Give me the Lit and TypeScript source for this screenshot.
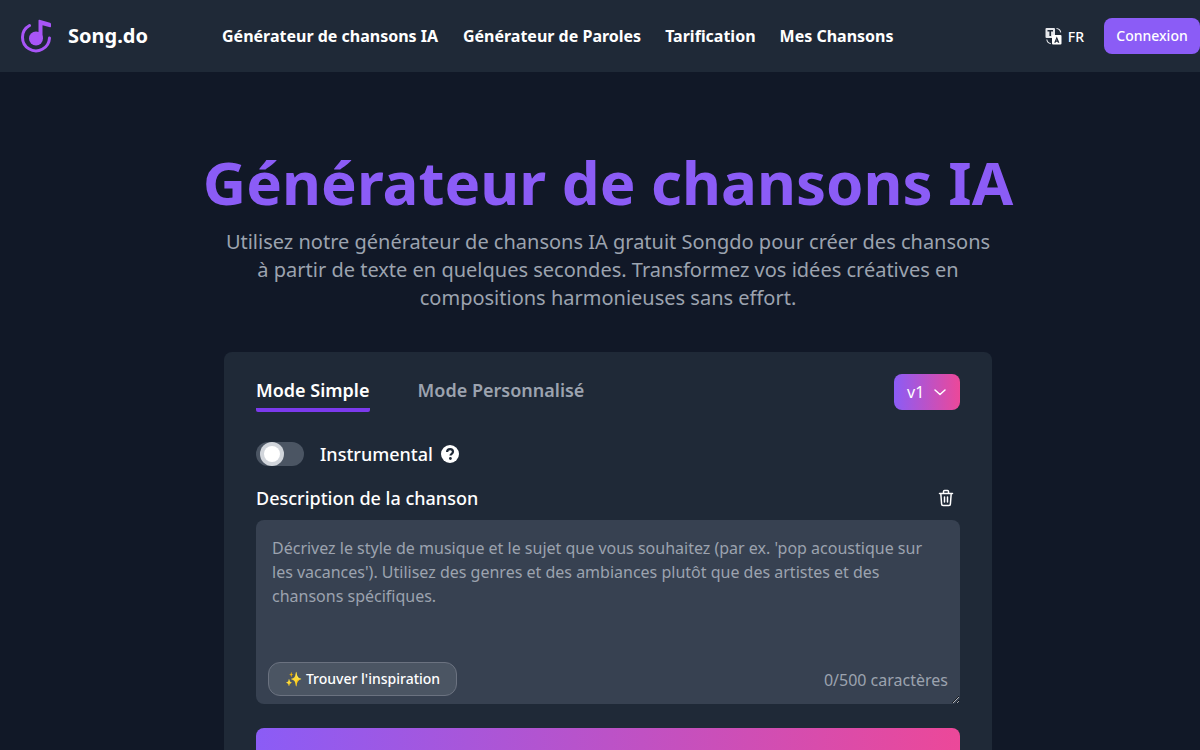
import { LitElement, html, css } from "lit";
import { customElement } from "lit/decorators.js";

@customElement("app-root")
export class AppRoot extends LitElement {
  static styles = css`
    :host { display: block; width: 1200px; height: 750px; overflow: hidden; background: #111827; }
    * { box-sizing: border-box; }
    .page { width: 1216px; min-height: 750px; background: #111827; color: #fff; font-family: "Noto Sans", sans-serif; }
    nav { height: 72px; background: #1f2937; display: flex; align-items: center; padding: 0 16px 0 20px; }
    .brand { display: flex; align-items: center; gap: 14px; width: 202px; }
    .brand svg { width: 34px; height: 34px; display: block; }
    .brand span { font-size: 20px; font-weight: 700; line-height: 28px; }
    .links { display: flex; gap: 24px; flex: 1; }
    .links a { font-size: 16px; font-weight: 700; line-height: 24px; color: #fff; }
    .links a:first-child { margin-right: 0.8px; }
    .lang { display: flex; align-items: center; gap: 5px; font-size: 14px; font-weight: 500; margin-right: 20px; }
    .lang svg { width: 18px; height: 18px; display: block; }
    .login { height: 36px; border: 0; border-radius: 8px; background: #8b5cf6; color: #fff; font: 500 14px/20px "Noto Sans", sans-serif; padding: 0 0 1px; width: 96px; }
    main { display: flex; flex-direction: column; align-items: center; padding-top: 70px; }
    h1 { margin: 0; font-size: 60px; line-height: 80px; font-weight: 700; color: #8b5cf6; }
    .lead { margin: 6px 0 0; width: 768px; text-align: center; color: #9ca3af; font-size: 20px; line-height: 28px; }
    .card { width: 768px; margin-top: 40px; background: #1f2937; border-radius: 8px; padding: 22px 32px 32px; }
    .tabs { display: flex; align-items: flex-start; gap: 48px; height: 36px; }
    .tab { font-size: 18px; font-weight: 600; line-height: 28px; color: #9ca3af; margin-top: 2px; }
    .tab.on { color: #fff; border-bottom: 4px solid #7c3aed; border-radius: 2px; height: 36px; width: 113.6px; white-space: nowrap; }
    .ver { margin-left: auto; width: 66px; height: 36px; border-radius: 8px; background: linear-gradient(90deg, #8b5cf6, #ec4899); display: flex; align-items: center; justify-content: space-between; padding: 0 13px; font-size: 16px; }
    .ver svg { width: 14px; height: 14px; display: block; }
    .instr { display: flex; align-items: center; margin-top: 32px; height: 24px; }
    .sw { width: 48px; height: 24px; border-radius: 12px; background: #4b5563; position: relative; margin-right: 16px; }
    .knob { position: absolute; left: 8px; top: 4px; width: 16px; height: 16px; border-radius: 50%; background: #fff; box-shadow: 0 0 0 4px #d1d5db; }
    .instr span { font-size: 18px; line-height: 28px; font-weight: 500; }
    .instr svg { width: 18px; height: 18px; margin-left: 8px; display: block; }
    .lab { display: flex; align-items: center; justify-content: space-between; margin-top: 18px; height: 28px; padding-right: 4px; }
    .lab span { font-size: 18px; font-weight: 500; line-height: 28px; }
    .lab svg { width: 20px; height: 20px; display: block; }
    .box { position: relative; margin-top: 8px; height: 184px; }
    textarea { display: block; width: 100%; height: 100%; background: #374151; border: 0; outline: 0; border-radius: 8px; padding: 16px; color: #fff; font: 16px/24px "Noto Sans", sans-serif; resize: vertical; }
    textarea::placeholder { color: #9ca3af; opacity: 1; }
    .insp { position: absolute; left: 12px; bottom: 8px; height: 34px; width: 189px; border-radius: 12px; border: 1px solid #6b7280; background: #4b5563; color: #fff; font: 500 14px "Noto Sans", "Noto Color Emoji", sans-serif; display: flex; align-items: center; justify-content: center; padding: 0 0 2px; }
    .count { position: absolute; right: 12px; bottom: 12px; font-size: 16px; line-height: 24px; color: #9ca3af; }
    .go { display: block; width: 100%; height: 56px; margin-top: 24px; border: 0; border-radius: 8px; background: linear-gradient(90deg, #8b5cf6, #ec4899); }
  `;

  render() {
    return html`<div class="page">
      <nav>
        <div class="brand">
          <svg viewBox="0 0 34 34" fill="none" aria-hidden="true">
            <path d="M9.500 6.500 A13.500 13.500 0 1 0 29.500 19" stroke="#a855f7" stroke-width="3" stroke-linecap="round"/>
            <circle cx="16" cy="19.500" r="7" fill="#a855f7"/>
            <path d="M18.500 19.500 V1.500 Q18.500 .5 19.500 .8 L30 3.800 Q31 4.100 31 5 V7.500 Q31 8.500 30 8.200 L22.500 6.200 V19.500 Z" fill="#a855f7"/>
          </svg>
          <span>Song.do</span>
        </div>
        <div class="links">
          <a>Générateur de chansons IA</a><a>Générateur de Paroles</a><a>Tarification</a><a>Mes Chansons</a>
        </div>
        <div class="lang">
          <svg viewBox="0 0 18 18" aria-hidden="true">
            <rect x="0.500" y="1" width="9.500" height="10" rx="1" fill="#e5e7eb"/>
            <path d="M2.500 3h5.500v1.600H6.100V9H4.400V4.600H2.500z" fill="#1f2937"/>
            <rect x="7" y="8" width="9.500" height="9.500" rx="1" fill="#fff"/>
            <path d="M11.800 9.500l2.600 6.300h-1.500l-.4-1.100h-1.500l-.4 1.100H9.200zm0 2.700l-.4 1.200h.8z" fill="#1f2937"/>
            <path d="M11.500 1.500c2 .2 3.800 1.600 4.200 3.800M1.800 12.500c.3 2 1.800 3.800 4 4.200" stroke="#e5e7eb" stroke-width="1.100" fill="none"/>
          </svg>
          FR
        </div>
        <button class="login">Connexion</button>
      </nav>
      <main>
        <h1>Générateur de chansons IA</h1>
        <p class="lead">Utilisez notre générateur de chansons IA gratuit Songdo pour créer des chansons<br>à partir de texte en quelques secondes. Transformez vos idées créatives en<br>compositions harmonieuses sans effort.</p>
        <section class="card">
          <div class="tabs">
            <div class="tab on">Mode Simple</div>
            <div class="tab">Mode Personnalisé</div>
            <div class="ver">v1
              <svg viewBox="0 0 14 14" fill="none" stroke="#fff" stroke-width="1.500" stroke-linecap="round" stroke-linejoin="round"><path d="M2 5l5 4.500L12 5"/></svg>
            </div>
          </div>
          <div class="instr">
            <div class="sw"><div class="knob"></div></div>
            <span>Instrumental</span>
            <svg viewBox="0 0 18 18"><circle cx="9" cy="9" r="9" fill="#fff"/><path d="M6.100 7c0-1.800 1.300-2.900 3-2.900S12 5.200 12 6.800c0 2-2.500 2-2.500 3.700" stroke="#1f2937" stroke-width="2.200" fill="none"/><circle cx="9.400" cy="13.500" r="1.400" fill="#1f2937"/></svg>
          </div>
          <div class="lab">
            <span>Description de la chanson</span>
            <svg viewBox="0 0 20 20" fill="none" stroke="#fff" stroke-width="1.500" stroke-linejoin="round" stroke-linecap="round"><path d="M3.500 5.500h13M7.500 5.500V3.500a1 1 0 0 1 1-1h3a1 1 0 0 1 1 1v2M4.800 5.500l.8 10.500a1.500 1.500 0 0 0 1.500 1.500h5.800a1.500 1.500 0 0 0 1.500-1.500l.8-10.500M8.500 9v5M11.500 9v5"/></svg>
          </div>
          <div class="box">
            <textarea placeholder="Décrivez le style de musique et le sujet que vous souhaitez (par ex. 'pop acoustique sur les vacances'). Utilisez des genres et des ambiances plutôt que des artistes et des chansons spécifiques."></textarea>
            <button class="insp">✨ Trouver l'inspiration</button>
            <div class="count">0/500 caractères</div>
          </div>
          <button class="go" aria-label="Générer"></button>
        </section>
      </main>
    </div>`;
  }
}
